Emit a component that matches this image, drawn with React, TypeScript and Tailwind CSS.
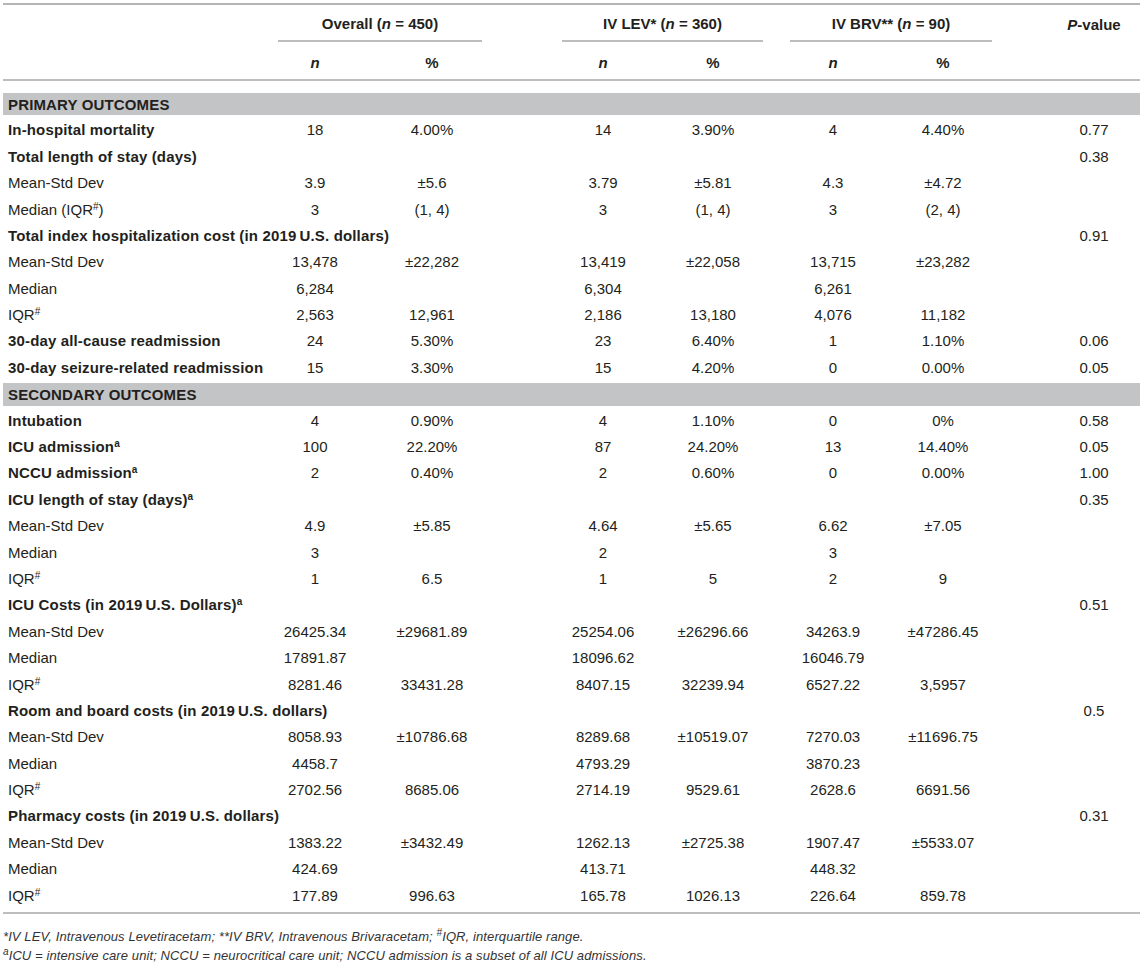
import React from "react";

type Row =
  | { kind: "section"; label: string }
  | { kind: "row"; label: React.ReactNode; bold?: boolean; v?: string[]; p?: string };

const cols = "grid grid-cols-[257px_110px_124px_54px_110px_110px_10px_110px_110px_50px_92px]";

const Sup = ({ c }: { c: string }) => <sup className="text-[10px]">{c}</sup>;
const IQR = (
  <>
    IQR<Sup c="#" />
  </>
);
const TS = "\u2009";

const rows: Row[] = [
  { kind: "section", label: "PRIMARY OUTCOMES" },
  { kind: "row", bold: true, label: "In-hospital mortality", v: ["18", "4.00%", "14", "3.90%", "4", "4.40%"], p: "0.77" },
  { kind: "row", bold: true, label: "Total length of stay (days)", p: "0.38" },
  { kind: "row", label: "Mean-Std Dev", v: ["3.9", "±5.6", "3.79", "±5.81", "4.3", "±4.72"] },
  { kind: "row", label: <>Median ({IQR})</>, v: ["3", "(1, 4)", "3", "(1, 4)", "3", "(2, 4)"] },
  { kind: "row", bold: true, label: `Total index hospitalization cost (in 2019${TS}U.S. dollars)`, p: "0.91" },
  { kind: "row", label: "Mean-Std Dev", v: ["13,478", "±22,282", "13,419", "±22,058", "13,715", "±23,282"] },
  { kind: "row", label: "Median", v: ["6,284", "", "6,304", "", "6,261", ""] },
  { kind: "row", label: IQR, v: ["2,563", "12,961", "2,186", "13,180", "4,076", "11,182"] },
  { kind: "row", bold: true, label: "30-day all-cause readmission", v: ["24", "5.30%", "23", "6.40%", "1", "1.10%"], p: "0.06" },
  { kind: "row", bold: true, label: "30-day seizure-related readmission", v: ["15", "3.30%", "15", "4.20%", "0", "0.00%"], p: "0.05" },
  { kind: "section", label: "SECONDARY OUTCOMES" },
  { kind: "row", bold: true, label: "Intubation", v: ["4", "0.90%", "4", "1.10%", "0", "0%"], p: "0.58" },
  { kind: "row", bold: true, label: <>ICU admission<Sup c="a" /></>, v: ["100", "22.20%", "87", "24.20%", "13", "14.40%"], p: "0.05" },
  { kind: "row", bold: true, label: <>NCCU admission<Sup c="a" /></>, v: ["2", "0.40%", "2", "0.60%", "0", "0.00%"], p: "1.00" },
  { kind: "row", bold: true, label: <>ICU length of stay (days)<Sup c="a" /></>, p: "0.35" },
  { kind: "row", label: "Mean-Std Dev", v: ["4.9", "±5.85", "4.64", "±5.65", "6.62", "±7.05"] },
  { kind: "row", label: "Median", v: ["3", "", "2", "", "3", ""] },
  { kind: "row", label: IQR, v: ["1", "6.5", "1", "5", "2", "9"] },
  { kind: "row", bold: true, label: <>ICU Costs (in 2019{TS}U.S. Dollars)<Sup c="a" /></>, p: "0.51" },
  { kind: "row", label: "Mean-Std Dev", v: ["26425.34", "±29681.89", "25254.06", "±26296.66", "34263.9", "±47286.45"] },
  { kind: "row", label: "Median", v: ["17891.87", "", "18096.62", "", "16046.79", ""] },
  { kind: "row", label: IQR, v: ["8281.46", "33431.28", "8407.15", "32239.94", "6527.22", "3,5957"] },
  { kind: "row", bold: true, label: `Room and board costs (in 2019${TS}U.S. dollars)`, p: "0.5" },
  { kind: "row", label: "Mean-Std Dev", v: ["8058.93", "±10786.68", "8289.68", "±10519.07", "7270.03", "±11696.75"] },
  { kind: "row", label: "Median", v: ["4458.7", "", "4793.29", "", "3870.23", ""] },
  { kind: "row", label: IQR, v: ["2702.56", "8685.06", "2714.19", "9529.61", "2628.6", "6691.56"] },
  { kind: "row", bold: true, label: `Pharmacy costs (in 2019${TS}U.S. dollars)`, p: "0.31" },
  { kind: "row", label: "Mean-Std Dev", v: ["1383.22", "±3432.49", "1262.13", "±2725.38", "1907.47", "±5533.07"] },
  { kind: "row", label: "Median", v: ["424.69", "", "413.71", "", "448.32", ""] },
  { kind: "row", label: IQR, v: ["177.89", "996.63", "165.78", "1026.13", "226.64", "859.78"] },
];

export default function App() {
  return (
    <div className="w-[1145px] h-[969px] bg-white text-[#231f20] font-['Liberation_Sans',Arial,sans-serif] text-[15px] pt-[3px]">
      <div className="ml-[3px] w-[1137px]">
        {/* Header */}
        <div className="border-t-2 border-[#b5b5b5]">
          <div className={`${cols} h-[37px] font-bold`}>
            <div />
            <div className="col-span-2 ml-[18px] mr-[12px] pt-[4px] flex items-center justify-center border-b-2 border-[#bdbdbd]">
              <span>
                Overall (<i>n</i> = 450)
              </span>
            </div>
            <div />
            <div className="col-span-2 ml-[14px] mr-[5px] pt-[4px] flex items-center justify-center border-b-2 border-[#bdbdbd]">
              <span>
                IV LEV* (<i>n</i> = 360)
              </span>
            </div>
            <div />
            <div className="col-span-2 ml-[12px] mr-[6px] pt-[4px] flex items-center justify-center border-b-2 border-[#bdbdbd]">
              <span>
                IV BRV** (<i>n</i> = 90)
              </span>
            </div>
            <div />
            <div className="pt-[4px] flex items-center justify-center">
              <span>
                <i>P</i>-value
              </span>
            </div>
          </div>
          <div className={`${cols} h-[39px] pt-[6px] font-bold items-center text-center border-b-2 border-[#bdbdbd]`}>
            <div />
            <div><i>n</i></div>
            <div>%</div>
            <div />
            <div><i>n</i></div>
            <div>%</div>
            <div />
            <div><i>n</i></div>
            <div>%</div>
            <div />
            <div />
          </div>
        </div>

        {/* Body */}
        <div className="pt-[10px]">
          {rows.map((r, i) => {
            if (r.kind === "section") {
              return (
                <div key={i} className="h-[26.4px] py-[2px]">
                  <div className="h-full bg-[#c3c4c6] flex items-center pl-[5px] pt-[2px] font-bold tracking-[0.15px]">{r.label}</div>
                </div>
              );
            }
            const v = r.v ?? ["", "", "", "", "", ""];
            return (
              <div key={i} className={`${cols} h-[26.4px] items-center`}>
                <div className={`pl-[5px] whitespace-nowrap ${r.bold ? "font-bold tracking-[0.15px]" : ""}`}>{r.label}</div>
                <div className="text-center">{v[0]}</div>
                <div className="text-center">{v[1]}</div>
                <div />
                <div className="text-center">{v[2]}</div>
                <div className="text-center">{v[3]}</div>
                <div />
                <div className="text-center">{v[4]}</div>
                <div className="text-center">{v[5]}</div>
                <div />
                <div className="text-center">{r.p ?? ""}</div>
              </div>
            );
          })}
        </div>

        {/* Footnotes */}
        <div className="mt-[3px] border-t-2 border-[#bdbdbd] pt-[13px] italic text-[13px] leading-[19px] text-[#333] tracking-[0.1px]">
          <p>
            *IV LEV, Intravenous Levetiracetam; **IV BRV, Intravenous Brivaracetam; <Sup c="#" />IQR, interquartile range.
          </p>
          <p>
            <Sup c="a" />ICU = intensive care unit; NCCU = neurocritical care unit; NCCU admission is a subset of all ICU admissions.
          </p>
        </div>
      </div>
    </div>
  );
}
